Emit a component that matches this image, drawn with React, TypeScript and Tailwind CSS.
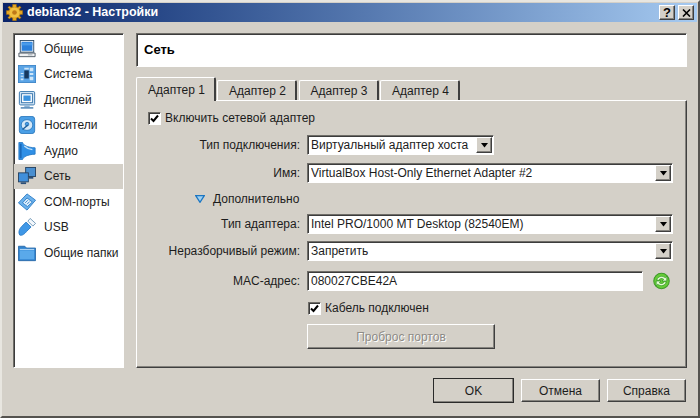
import React from "react";

const sunken = "border border-t-[#6f6d68] border-l-[#6f6d68] border-r-white border-b-white shadow-[inset_1px_1px_0_#3c3c3c]";
const raised = "border border-t-white border-l-white border-r-[#3f3f3f] border-b-[#3f3f3f] shadow-[inset_-1px_-1px_0_#85837e]";

const S = ({ children }: { children: React.ReactNode }) => (
  <svg width="18" height="18" viewBox="0 0 20 20">{children}</svg>
);

const IconGeneral = () => (
  <S>
    <rect x="2.5" y="0.5" width="15" height="13" fill="#f0f4f8" stroke="#2b4a68" />
    <rect x="4" y="2" width="12" height="10" fill="#2b80dc" />
    <path d="M4 3h12v3H4z" fill="#4a9bea" />
    <path d="M1 14.5h18v4H1z" fill="#eef0f2" stroke="#4a5560" />
    <path d="M11 16.5h5" stroke="#9aa4ad" />
  </S>
);
const IconSystem = () => (
  <S>
    <rect x="0.5" y="0.5" width="19" height="19" fill="#5aa4e6" stroke="#3d86c8" />
    <rect x="7" y="6" width="5" height="9" fill="#16395f" />
    <path d="M13 3h4v4h-4zM13 9h4v2h-4zM13 13h4v4h-4zM3 9h3v1H3zM3 12h3v1H3zM3 15h3v2H3zM7 3h5v2H7z" fill="#cfe6f8" />
  </S>
);
const IconDisplay = () => (
  <S>
    <rect x="1.5" y="0.5" width="17" height="15" rx="1.5" fill="#cfe3f4" stroke="#2f6fa8" />
    <rect x="4" y="3" width="12" height="10" fill="#ffffff" stroke="#2f6fa8" />
    <rect x="6" y="5" width="8" height="6" fill="#3b93df" />
    <path d="M7 16h6v2H7z" fill="#8fb4d4" />
    <path d="M3 18.8h14" stroke="#2f6fa8" strokeWidth="1.4" />
  </S>
);
const IconStorage = () => (
  <S>
    <rect x="1.5" y="0.5" width="17" height="19" rx="3" fill="#4a9fe6" stroke="#2a78bd" />
    <ellipse cx="10" cy="10" rx="6.5" ry="6" fill="#d5e8f7" stroke="#2a78bd" />
    <circle cx="10" cy="9" r="2" fill="#4a9fe6" stroke="#2a78bd" />
    <path d="M5 15l6-5" stroke="#1f5f9c" strokeWidth="1.6" />
  </S>
);
const IconAudio = () => (
  <S>
    <path d="M1 0.5h4c1 3 5 5.500 14 6v7c-9 .5-13 3-14 6H1z" fill="#2f8fe6" stroke="#2a7cc6" />
    <path d="M3 2v16" stroke="#1a68b8" strokeWidth="2" />
    <path d="M7 4.500c2 2 5 3.500 9 4" stroke="#bfe0f8" fill="none" strokeWidth="1.5" />
  </S>
);
const IconNetwork = () => (
  <S>
    <rect x="8.500" y="0.500" width="11" height="10" fill="#4a8fd0" stroke="#24405f" />
    <rect x="0.500" y="6.500" width="11" height="10" fill="#3f8fdc" stroke="#24405f" />
    <path d="M3 17h6v2H3z" fill="#2b4f78" />
    <path d="M12 11h5v2h-5z" fill="#2b4f78" />
  </S>
);
const IconCom = () => (
  <S>
    <path d="M0.500 11L10 1l9.500 7L10 19z" fill="#6db2ec" stroke="#2a7cc6" />
    <path d="M5 11l5-5.500 6 4.500-5.500 5z" fill="#e3f1fc" stroke="#2a7cc6" />
    <path d="M8 11l3-3M10 12.500l3-3" stroke="#2a7cc6" />
  </S>
);
const IconUsb = () => (
  <S>
    <path d="M2 19c-2-3-.5-7 2-9.500l5-5 5.500 5.500-5 5c-2 2.500-5 5-7.500 4z" fill="#3f97e6" stroke="#2a7cc6" />
    <path d="M11 3.500L13.500.5l6 5.500-3 3z" fill="#f4f8fc" stroke="#6b93b4" />
  </S>
);
const IconFolder = () => (
  <S>
    <path d="M0.500 2.500h7l2 2h10v14H.5z" fill="#2f83d0" stroke="#2a6aa8" />
    <path d="M2 7h16v10H2z" fill="#5aa9ea" />
    <path d="M2 6h16" stroke="#cde6fa" />
  </S>
);

const items: [React.ComponentType, string, boolean?][] = [
  [IconGeneral, "Общие"],
  [IconSystem, "Система"],
  [IconDisplay, "Дисплей"],
  [IconStorage, "Носители"],
  [IconAudio, "Аудио"],
  [IconNetwork, "Сеть", true],
  [IconCom, "COM-порты"],
  [IconUsb, "USB"],
  [IconFolder, "Общие папки"],
];

const Check = () => (
  <span className={`w-[13px] h-[13px] bg-white flex items-center justify-center shrink-0 ${sunken}`}>
    <svg width="9" height="9" viewBox="0 0 9 9">
      <path d="M1 4.500l2.500 2.500L8 1.500" fill="none" stroke="#000" strokeWidth="2" />
    </svg>
  </span>
);

const Arrow = () => (
  <svg width="7" height="5" viewBox="0 0 7 5">
    <path d="M0 0h7L3.500 4.500z" fill="#000" />
  </svg>
);

const Combo = ({ text, className = "" }: { text: string; className?: string }) => (
  <div className={`h-5 bg-white flex items-center pl-[3px] pr-px ${sunken} ${className}`}>
    <span className="flex-1 whitespace-nowrap overflow-hidden">{text}</span>
    <span className={`w-4 h-4 bg-[#d4d0c8] flex items-center justify-center ${raised}`}>
      <Arrow />
    </span>
  </div>
);

const Label = ({ children }: { children: React.ReactNode }) => (
  <div className="text-right whitespace-nowrap h-5 leading-5">{children}</div>
);

const Tab = ({ text, active }: { text: string; active?: boolean }) => (
  <div
    className={
      active
        ? "w-[80px] h-[24px] mr-px -mb-px z-10 relative bg-[#d4d0c8] border-t border-l border-white border-r-2 border-r-[#3f3f3f] rounded-t-[2px] flex items-center justify-center pl-[2px]"
        : "w-[80px] h-[20px] mr-[1.5px] bg-[#d4d0c8] border-t border-l border-white border-r-2 border-r-[#3f3f3f] rounded-t-[2px] flex items-center justify-center pl-[2px]"
    }
  >
    {text}
  </div>
);

const FooterButton = ({ text, isDefault }: { text: string; isDefault?: boolean }) => (
  <div
    className={
      isDefault
        ? `w-[81px] h-[25px] flex items-center justify-center outline outline-1 outline-[#2a2a2a] -outline-offset-1 ${raised}`
        : `w-[79px] h-[23px] flex items-center justify-center ${raised}`
    }
  >
    {text}
  </div>
);

export default function App() {
  return (
    <div
      className="w-[700px] h-[418px] bg-[#d4d0c8] text-[12px] text-[#1c1c1c] flex flex-col overflow-hidden border-r-2 border-b-2 border-r-[#55534f] border-b-[#55534f] border-l-2 border-l-[#e8e6e0] border-t-2 border-t-[#e8e6e0]"
      style={{ fontFamily: '"Liberation Sans", Arial, sans-serif' }}
    >
      <div className="mx-px mt-px h-[19px] shrink-0 bg-gradient-to-r from-[#0a246a] to-[#a6caf0] flex items-center pl-[3px] pr-[3px]">
        <svg width="17" height="17" viewBox="0 0 16 16" className="shrink-0">
          <g fill="#e8a820" stroke="#8a5a10" strokeWidth="0.5">
            <circle cx="8" cy="8" r="5.800" />
            <path d="M6.200 0.300h3.600v3.200H6.200zM6.200 12.500h3.600v3.200H6.200zM0.300 6.200h3.200v3.600H0.300zM12.500 6.200h3.200v3.600h-3.200zM1.800 3.200l1.400-1.400 2.500 2.500-1.400 1.400zM14.200 3.200l-1.400-1.400-2.500 2.500 1.400 1.400zM1.800 12.800l1.400 1.400 2.500-2.500-1.400-1.400zM14.200 12.800l-1.400 1.400-2.500-2.500 1.400-1.400z" />
          </g>
          <circle cx="8" cy="8" r="5" fill="#f2c040" />
          <circle cx="8" cy="8" r="2.200" fill="#c07a18" />
        </svg>
        <span className="ml-[4px] font-bold text-[12.500px] text-white flex-1">debian32 - Настройки</span>
        <span className={`w-4 h-[15px] bg-[#d4d0c8] text-black font-bold text-[13px] leading-none flex items-center justify-center ${raised}`}>?</span>
        <span className={`w-4 h-[15px] ml-[3px] bg-[#d4d0c8] flex items-center justify-center ${raised}`}>
          <svg width="9" height="8" viewBox="0 0 9 8">
            <path d="M1 0.500l7 7M8 0.500l-7 7" stroke="#000" strokeWidth="1.600" />
          </svg>
        </span>
      </div>

      <div className="flex-1 flex flex-col pl-[11px] pr-[11px] pt-[11px]">
        <div className="flex gap-3 h-[335px]">
          <div className={`w-[111px] bg-white flex flex-col pt-[2px] ${sunken}`}>
            {items.map(([Icon, name, selected]) => (
              <div
                key={name}
                className={`h-[25.500px] shrink-0 flex items-center pl-[3px] gap-[7px] ${selected ? "bg-[#d4d0c8]" : ""}`}
              >
                <span className="w-5 h-5 shrink-0 flex items-center justify-center"><Icon /></span>
                <span className="whitespace-nowrap">{name}</span>
              </div>
            ))}
          </div>

          <div className="flex-1 flex flex-col">
            <div className={`h-[34px] bg-white flex items-center pl-[7px] font-bold text-[13px] text-black shrink-0 ${sunken}`}>Сеть</div>

            <div className="flex items-end mt-[9px] h-[24px] shrink-0">
              <Tab text="Адаптер 1" active />
              <Tab text="Адаптер 2" />
              <Tab text="Адаптер 3" />
              <Tab text="Адаптер 4" />
            </div>

            <div className={`flex-1 pt-[10px] pl-[11px] pr-[13px] ${raised}`}>
              <div className="flex items-center gap-[4px] h-[14px]">
                <Check />
                <span>Включить сетевой адаптер</span>
              </div>

              <div className="grid grid-cols-[152px_1fr] gap-x-[7px] mt-[10px] items-center">
                <Label>Тип подключения:</Label>
                <Combo text="Виртуальный адаптер хоста" className="w-[187px]" />
                <div className="col-span-2 h-[8px]" />
                <Label>Имя:</Label>
                <Combo text="VirtualBox Host-Only Ethernet Adapter #2" />
                <div className="col-start-1 col-span-2 h-[31px] flex items-center pl-[47px] gap-[8px]">
                  <svg width="10" height="8" viewBox="0 0 10 8">
                    <path d="M0.700 0.700h8.600L5 7.300z" fill="#9fd0f2" stroke="#1b76c2" strokeWidth="1.300" />
                  </svg>
                  <span>Дополнительно</span>
                </div>
                <Label>Тип адаптера:</Label>
                <Combo text="Intel PRO/1000 MT Desktop (82540EM)" />
                <div className="col-span-2 h-[7px]" />
                <Label>Неразборчивый режим:</Label>
                <Combo text="Запретить" />
                <div className="col-span-2 h-[10px]" />
                <Label>MAC-адрес:</Label>
                <div className="flex items-center">
                  <div className={`h-5 w-[336px] bg-white flex items-center pl-[3px] ${sunken}`}>080027CBE42A</div>
                  <svg width="17" height="18" viewBox="0 0 16 17" className="ml-[10px]">
                    <circle cx="8" cy="8.500" r="7.300" fill="#66cc38" stroke="#3f9a2a" />
                    <path d="M3.500 7.500C4.500 4 9 3 11.500 5.500L13 4v4.500H8.500l1.600-1.600C8.500 5.500 6 6 5.300 8z" fill="#e6fbd2" stroke="#238a1c" strokeWidth="0.600" />
                    <path d="M12.500 9.500C11.500 13 7 14 4.500 11.500L3 13V8.500h4.500l-1.600 1.600C7.500 11.500 10 11 10.700 9z" fill="#e6fbd2" stroke="#238a1c" strokeWidth="0.600" />
                  </svg>
                </div>
                <div className="col-start-2 flex items-center gap-[4px] mt-[10px] h-[14px] pl-px">
                  <Check />
                  <span>Кабель подключен</span>
                </div>
                <div className={`col-start-2 mt-[9px] w-[188px] h-[25px] flex items-center justify-center text-[#8d8b86] [text-shadow:1px_1px_0_#ffffff] ${raised}`}>
                  Проброс портов
                </div>
              </div>
            </div>
          </div>
        </div>

        <div className="flex justify-end items-center gap-[7px] mt-[10px] mr-px">
          <FooterButton text="OK" isDefault />
          <FooterButton text="Отмена" />
          <FooterButton text="Справка" />
        </div>
      </div>
    </div>
  );
}
